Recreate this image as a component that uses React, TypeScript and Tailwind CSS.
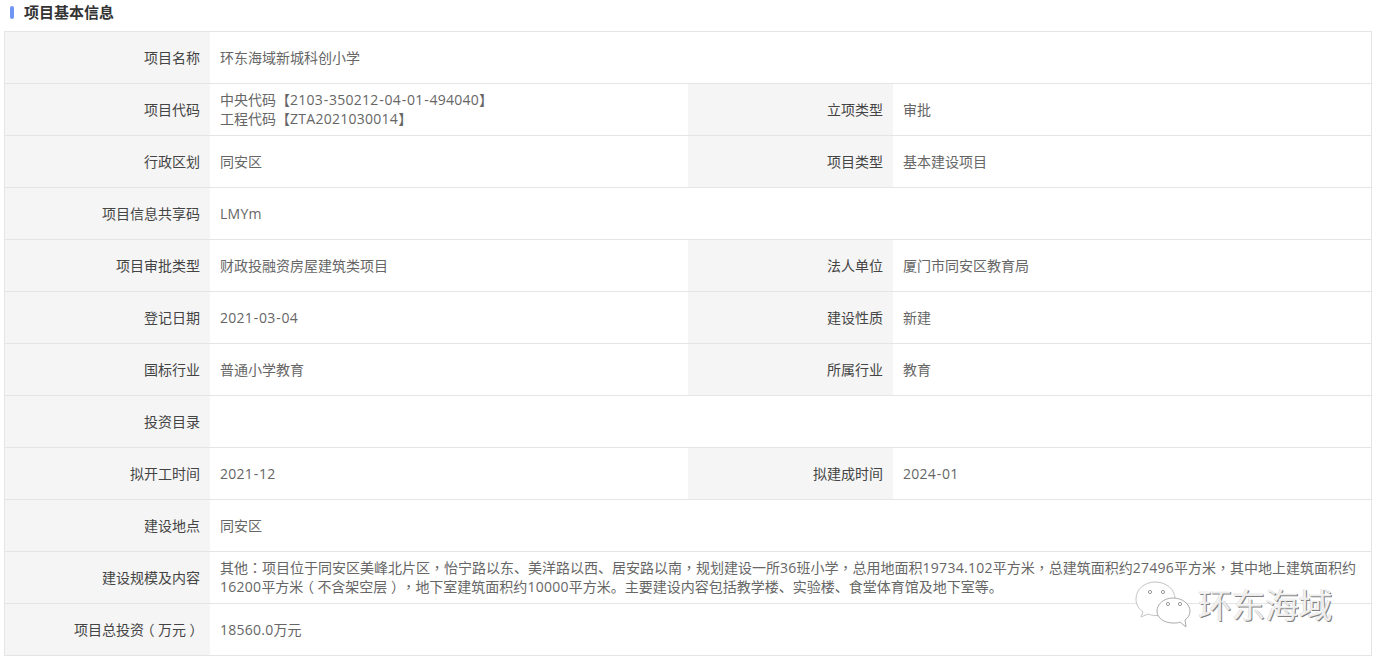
import React from "react";

const L = "w-[205px] shrink-0 bg-[#f5f5f5] flex items-center justify-end pr-[10px] text-[#444]";
const V = "flex-1 min-w-0 flex items-center pl-[10px] pr-[10px] text-[#666] leading-[19px]";

// Centred punctuation: half-width glyph with even padding, or the TC cut. Latin runs get the wider set of the reference.
function T({ s }: { s: string }) {
  const parts = s.split(/([，：（）]|-|[0-9A-Za-z.]+)/);
  return (
    <>
      {parts.map((p, i) => {
        if (!p) return null;
        if (p === "（" || p === "）") return <span key={i} className="px-[3.5px] [font-feature-settings:'halt']">{p}</span>;
        if (p === "，" || p === "：") return <span key={i} className="font-['Noto_Sans_CJK_TC',sans-serif]">{p}</span>;
        if (p === "-") return <span key={i} className="mx-[0.7px]">{p}</span>;
        if (/^[0-9A-Za-z.]+$/.test(p)) return <span key={i} className="tracking-[0.27px]">{p}</span>;
        return <React.Fragment key={i}>{p}</React.Fragment>;
      })}
    </>
  );
}

type Row = [string, string | string[], string?, string?];
const rows: Row[] = [
  ["项目名称", "环东海域新城科创小学"],
  ["项目代码", ["中央代码【2103-350212-04-01-494040】", "工程代码【ZTA2021030014】"], "立项类型", "审批"],
  ["行政区划", "同安区", "项目类型", "基本建设项目"],
  ["项目信息共享码", "LMYm"],
  ["项目审批类型", "财政投融资房屋建筑类项目", "法人单位", "厦门市同安区教育局"],
  ["登记日期", "2021-03-04", "建设性质", "新建"],
  ["国标行业", "普通小学教育", "所属行业", "教育"],
  ["投资目录", ""],
  ["拟开工时间", "2021-12", "拟建成时间", "2024-01"],
  ["建设地点", "同安区"],
  ["建设规模及内容", "其他：项目位于同安区美峰北片区，怡宁路以东、美洋路以西、居安路以南，规划建设一所36班小学，总用地面积19734.102平方米，总建筑面积约27496平方米，其中地上建筑面积约16200平方米（不含架空层），地下室建筑面积约10000平方米。主要建设内容包括教学楼、实验楼、食堂体育馆及地下室等。"],
  ["项目总投资（万元）", "18560.0万元"],
];

function Value({ v }: { v: string | string[] }) {
  if (Array.isArray(v)) {
    return <div className="mb-[1px]">{v.map((line, i) => <div key={i}><T s={line} /></div>)}</div>;
  }
  return <div className={v.length > 60 ? "mb-[1px]" : ""}><T s={v} /></div>;
}

export default function App() {
  return (
    <div className="relative w-[1378px] h-[667px] bg-white overflow-hidden text-[14px] [text-spacing-trim:space-all] font-['Open_Sans','Noto_Sans_CJK_SC',sans-serif]">
      <div className="h-[31px] flex items-start pl-[10px] pt-[3px]">
        <div className="w-[4px] h-[13px] mt-[3px] rounded-[2px] bg-[#6f95f5]"></div>
        <div className="ml-[10px] text-[15px] font-bold text-[#333] leading-[19px]">项目基本信息</div>
      </div>
      <div className="mx-[4px] w-[1368px] border border-[#e5e5e5] border-b-0">
        {rows.map(([a, b, c, d], i) => (
          <div key={i} className="flex h-[52px] border-b border-[#e5e5e5]">
            <div className={L}><div><T s={a} /></div></div>
            <div className={V}><Value v={b} /></div>
            {c && <div className={L}>{c}</div>}
            {c && <div className={V}><Value v={d ?? ""} /></div>}
          </div>
        ))}
      </div>
      <div className="absolute left-[1135px] top-[580px] flex items-start">
        <svg width="60" height="52" viewBox="0 0 60 52">
          <path d="M20 2 C10 2 1 9 1 19 C1 25 4 29 8 32 L6 37 L13 34 C15 35 18 35.5 21 35.5 C31 35.5 40 28 40 19 C40 9 31 2 20 2 Z" fill="#fff" stroke="#c4c4c4" strokeWidth="1" />
          <path d="M38 18 C29 18 22 24 22 31 C22 38 29 43 38 43 C41 43 43 43 45 42 L51 47 L50 40 C53 38 55 35 55 31 C55 24 47 18 38 18 Z" fill="#fff" stroke="#ababab" strokeWidth="1" />
          <circle cx="15" cy="12" r="1.6" fill="#fff" stroke="#999" />
          <circle cx="28" cy="12" r="1.6" fill="#fff" stroke="#999" />
          <circle cx="33" cy="24" r="1.6" fill="#fff" stroke="#999" />
          <circle cx="45" cy="24" r="1.6" fill="#fff" stroke="#999" />
        </svg>
        <div className="ml-[3px] mt-[4px] text-[34px] leading-[40px] tracking-[-0.5px] text-[#ffffffd9] [text-shadow:1px_1px_0_#808080,-0.5px_-0.5px_0_#d0d0d0] font-['Noto_Sans_CJK_SC',sans-serif]">环东海域</div>
      </div>
    </div>
  );
}
